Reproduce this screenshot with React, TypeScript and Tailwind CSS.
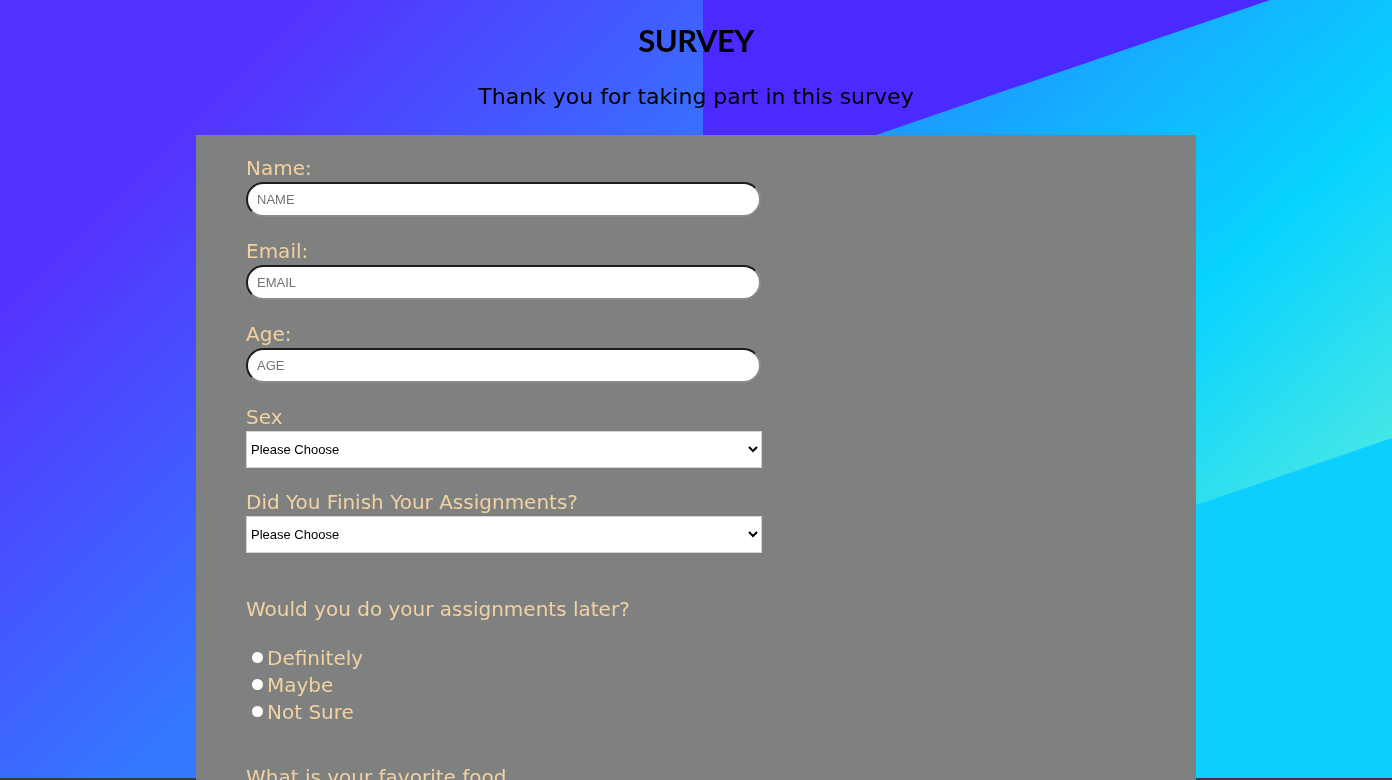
import React from "react";

const labelCls = "block text-[20px] leading-[24px] text-[#f3d2a2]";
const inputCls =
  "mt-[2px] block h-[35px] w-[515px] rounded-full border-2 border-t-[#1c1c1c] border-l-[#1c1c1c] border-r-[#8a8a8a] border-b-[#8a8a8a] bg-white px-[9px] font-['Liberation_Sans',Arial,sans-serif] text-[13px] text-black outline-none placeholder:text-[#737373]";
const selectCls =
  "mt-[2px] block h-[37px] w-[516px] border border-[#d4d4d4] bg-white pl-0 pr-[6px] font-['Liberation_Sans',Arial,sans-serif] text-[13px] text-black";

function Wallpaper() {
  return (
    <svg
      className="fixed inset-0 -z-10 h-full w-full"
      viewBox="0 0 1392 780"
      preserveAspectRatio="none"
    >
      <defs>
        <linearGradient id="left" gradientUnits="userSpaceOnUse" x1="150" y1="150" x2="450" y2="450">
          <stop offset="0" stopColor="#5532ff" />
          <stop offset="1" stopColor="#3577ff" />
        </linearGradient>
        <linearGradient id="band" gradientUnits="userSpaceOnUse" x1="1000" y1="40" x2="1392" y2="470">
          <stop offset="0" stopColor="#1c9cff" />
          <stop offset="0.55" stopColor="#07d3ff" />
          <stop offset="1" stopColor="#4ae8e4" />
        </linearGradient>
      </defs>
      <rect x="0" y="0" width="704" height="780" fill="url(#left)" />
      <rect x="703" y="0" width="689" height="780" fill="#0dcfff" />
      <polygon points="703,0 1392,0 1392,438 703,674" fill="url(#band)" />
      <polygon points="703,0 1270,0 879,134 703,194" fill="#4b2aff" />
      <rect x="0" y="778" width="1392" height="2" fill="#3a3a3a" />
    </svg>
  );
}

function Field({ label, placeholder }: { label: string; placeholder: string }) {
  return (
    <div className="mb-[22px]">
      <label className={labelCls}>{label}</label>
      <input className={inputCls} placeholder={placeholder} />
    </div>
  );
}

function Choice({ label }: { label: string }) {
  return (
    <div className="mb-[22px]">
      <label className={labelCls}>{label}</label>
      <select className={selectCls} defaultValue="">
        <option value="">Please Choose</option>
        <option>Male</option>
        <option>Female</option>
      </select>
    </div>
  );
}

export default function App() {
  const options = ["Definitely", "Maybe", "Not Sure"];

  return (
    <div className="relative min-h-screen font-['DejaVu_Sans',sans-serif]">
      <Wallpaper />

      <header className="pt-[22px] text-center text-black">
        <h1 className="font-['Lato',sans-serif] text-[31px] font-bold leading-[37px] tracking-[-0.5px]">SURVEY</h1>
        <h2 className="mt-[24px] text-[22px] leading-[28px]">Thank you for taking part in this survey</h2>
      </header>

      <form className="mx-auto mt-[24px] w-[1000px] bg-[#7f8080] pb-10 pl-[50px] pt-[21px]">
        <Field label="Name:" placeholder="NAME" />
        <Field label="Email:" placeholder="EMAIL" />
        <Field label="Age:" placeholder="AGE" />
        <Choice label="Sex" />
        <Choice label="Did You Finish Your Assignments?" />

        <p className={`${labelCls} mt-[44px]`}>Would you do your assignments later?</p>
        <div className="mt-[23px] flex flex-col">
          {options.map((o) => (
            <label key={o} className="flex h-[27px] items-center text-[20px] text-[#f3d2a2]">
              <input
                type="radio"
                name="later"
                className="ml-[6px] mr-[4px] h-[11px] w-[11px] appearance-none rounded-full bg-white"
              />
              {o}
            </label>
          ))}
        </div>

        <label className={`${labelCls} mt-[40px]`}>What is your favorite food</label>
        <input className={inputCls} placeholder="FOOD" />
      </form>
    </div>
  );
}
